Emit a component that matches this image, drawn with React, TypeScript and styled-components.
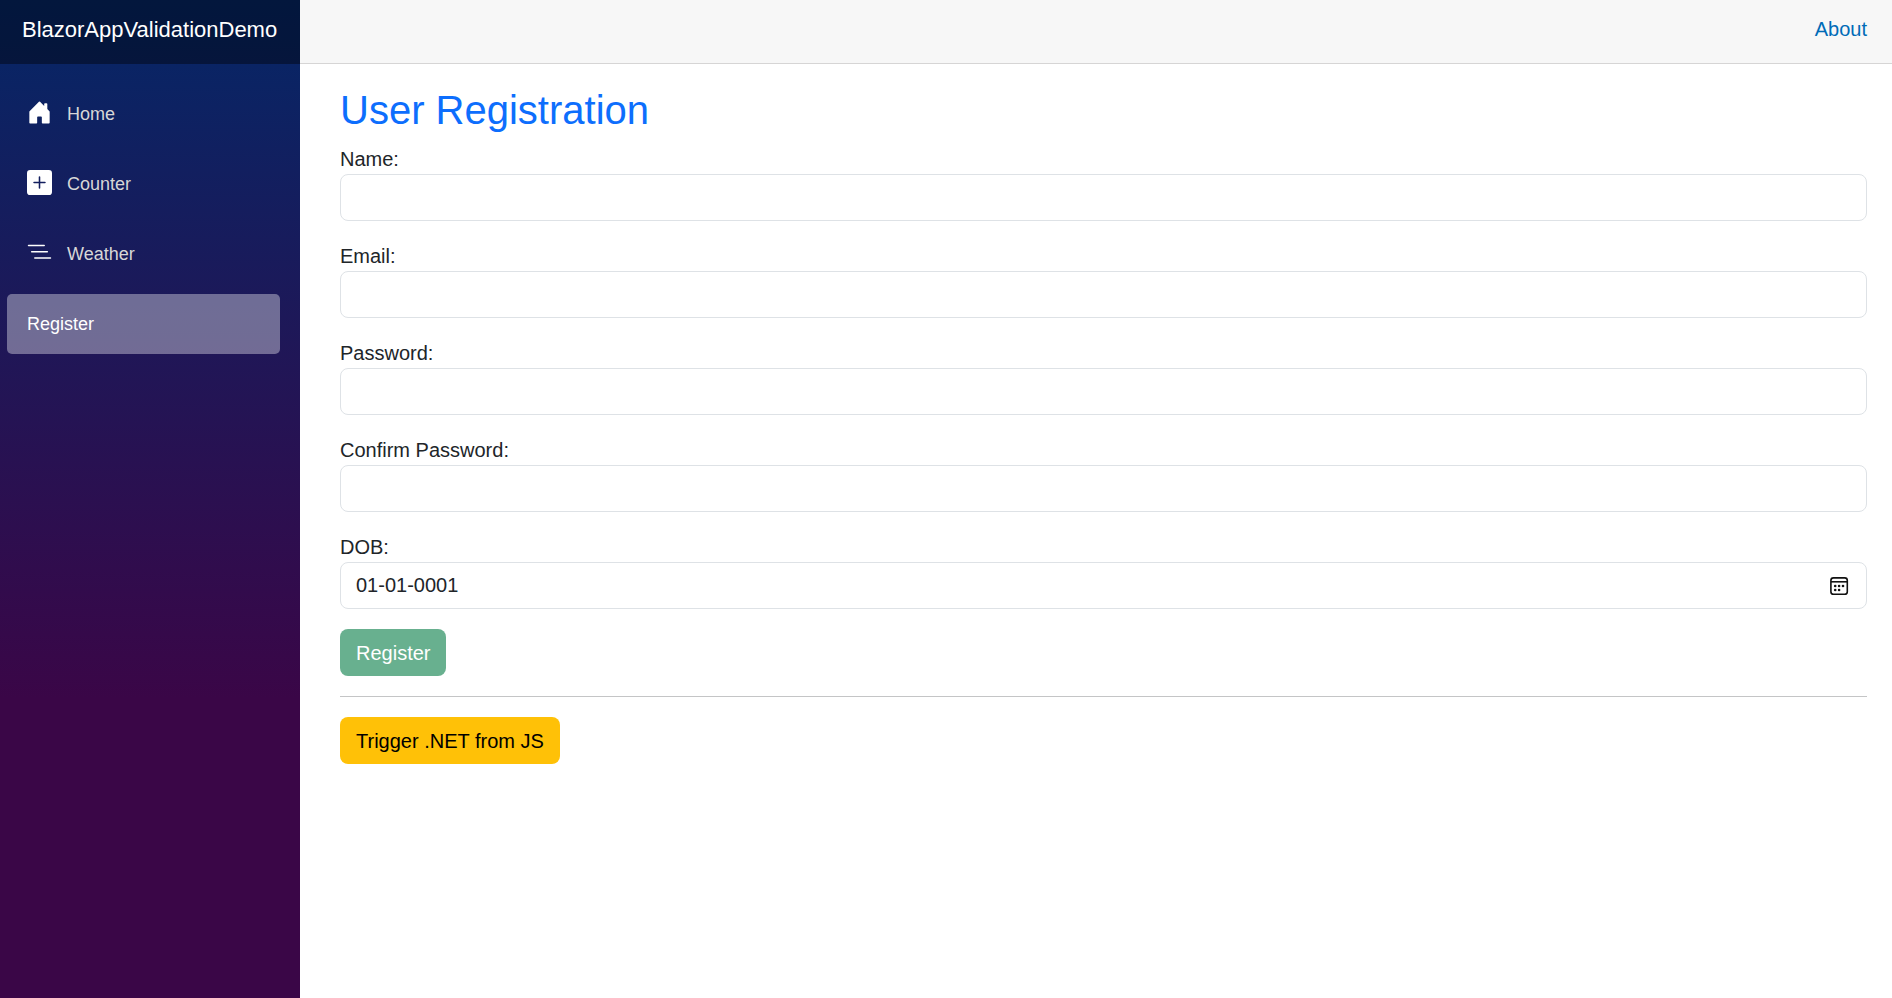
import React from "react";
import styled, { createGlobalStyle } from "styled-components";

const GlobalStyle = createGlobalStyle`
  *, *::before, *::after { box-sizing: border-box; }
  body {
    margin: 0;
    background: #fff;
    color: #212529;
    font-family: "Liberation Sans", Arial, sans-serif;
    font-size: 20px;
    line-height: 30px;
  }
`;

const Page = styled.div`
  display: flex;
  min-height: 100vh;
`;

const Sidebar = styled.aside`
  flex: 0 0 300px;
  background-image: linear-gradient(180deg, rgb(5, 39, 103) 0%, #3a0647 70%);
`;

const Brand = styled.div`
  display: flex;
  align-items: center;
  height: 64px;
  padding: 0 22px 4px;
  background: rgba(0, 0, 0, 0.4);
`;

const BrandLink = styled.a`
  color: #fff;
  font-size: 22px;
  text-decoration: none;
  white-space: nowrap;
`;

const Nav = styled.nav`
  display: flex;
  flex-direction: column;
  gap: 10px;
  padding: 20px 20px 20px 7px;
`;

const NavItem = styled.a<{ $active?: boolean }>`
  display: flex;
  align-items: center;
  height: 60px;
  padding: 0 20px;
  border-radius: 5px;
  font-size: 18px;
  text-decoration: none;
  color: ${(p) => (p.$active ? "#fff" : "#d7d7d7")};
  background: ${(p) => (p.$active ? "rgba(255, 255, 255, 0.37)" : "transparent")};
`;

const NavIcon = styled.svg`
  width: 25px;
  height: 25px;
  margin: 0 15px 3px 0;
  fill: #fff;
`;

const Main = styled.main`
  flex: 1;
  min-width: 0;
`;

const TopBar = styled.div`
  display: flex;
  align-items: center;
  justify-content: flex-end;
  height: 64px;
  padding: 0 25px 6px 40px;
  background: #f7f7f7;
  border-bottom: 1px solid #d6d5d5;
`;

const TopLink = styled.a`
  color: #006bb7;
  text-decoration: none;
`;

const Content = styled.article`
  padding: 22px 25px 22px 40px;
`;

const Title = styled.h1`
  margin: 0 0 10px;
  color: #0d6efd;
  font-size: 40px;
  font-weight: 400;
  line-height: 48px;
`;

const Field = styled.div`
  margin-bottom: 20px;
`;

const Label = styled.label`
  display: block;
  width: fit-content;
`;

const InputWrap = styled.div`
  position: relative;
`;

const Input = styled.input`
  display: block;
  width: 100%;
  height: 47px;
  padding: 0 15px;
  border: 1px solid #dee2e6;
  border-radius: 8px;
  background: #fff;
  color: #212529;
  font: inherit;
`;

const PickerButton = styled.button`
  position: absolute;
  top: 0;
  right: 16px;
  display: flex;
  align-items: center;
  height: 100%;
  padding: 0;
  border: 0;
  background: none;
`;

const Button = styled.button<{ $tone: "success" | "warning" }>`
  display: block;
  height: 47px;
  padding: 0 16px;
  border: 0;
  border-radius: 8px;
  font: inherit;
  color: ${(p) => (p.$tone === "success" ? "#fff" : "#000")};
  background: ${(p) => (p.$tone === "success" ? "#198754" : "#ffc107")};
  &:disabled { opacity: 0.65; }
`;

const Divider = styled.hr`
  margin: 20px 0;
  border: 0;
  border-top: 1px solid #c4c5c6;
`;

const icons = {
  home: "M6.5 14.5v-3.505c0-.245.25-.495.5-.495h2c.25 0 .5.25.5.5v3.5a.5.5 0 0 0 .5.5h4a.5.5 0 0 0 .5-.5v-7a.5.5 0 0 0-.146-.354L13 5.793V2.5a.5.5 0 0 0-.5-.5h-1a.5.5 0 0 0-.5.5v1.293L8.354 1.146a.5.5 0 0 0-.708 0l-6 6A.5.5 0 0 0 1.5 7.5v7a.5.5 0 0 0 .5.5h4a.5.5 0 0 0 .5-.5Z",
  plus: "M2 0a2 2 0 0 0-2 2v12a2 2 0 0 0 2 2h12a2 2 0 0 0 2-2V2a2 2 0 0 0-2-2H2zm6.5 4.5v3h3a.5.5 0 0 1 0 1h-3v3a.5.5 0 0 1-1 0v-3h-3a.5.5 0 0 1 0-1h3v-3a.5.5 0 0 1 1 0z",
  list: "M4.5 11.5A.5.5 0 0 1 5 11h10a.5.5 0 0 1 0 1H5a.5.5 0 0 1-.5-.5zm-2-4A.5.5 0 0 1 3 7h10a.5.5 0 0 1 0 1H3a.5.5 0 0 1-.5-.5zm-2-4A.5.5 0 0 1 1 3h10a.5.5 0 0 1 0 1H1a.5.5 0 0 1-.5-.5z",
};

const navItems: { label: string; icon?: keyof typeof icons }[] = [
  { label: "Home", icon: "home" },
  { label: "Counter", icon: "plus" },
  { label: "Weather", icon: "list" },
  { label: "Register" },
];

const fields = [
  { id: "name", label: "Name:", type: "text" },
  { id: "email", label: "Email:", type: "email" },
  { id: "password", label: "Password:", type: "password" },
  { id: "confirm", label: "Confirm Password:", type: "password" },
];

function CalendarIcon() {
  return (
    <svg width="24" height="24" viewBox="0 0 24 24" aria-hidden="true">
      <rect x="3.9" y="3.9" width="16.4" height="16.4" rx="2.6" fill="none" stroke="#111" strokeWidth="1.6" />
      <path d="M4 7.8h16.4" stroke="#111" strokeWidth="1.6" />
      <g fill="#111">
        <circle cx="8.2" cy="12" r="1.3" />
        <circle cx="12.1" cy="12" r="1.3" />
        <circle cx="16" cy="12" r="1.3" />
        <circle cx="8.2" cy="16" r="1.3" />
        <circle cx="12.1" cy="16" r="1.3" />
      </g>
    </svg>
  );
}

export default function App() {
  return (
    <>
      <GlobalStyle />
      <Page>
        <Sidebar>
          <Brand>
            <BrandLink href="#">BlazorAppValidationDemo</BrandLink>
          </Brand>
          <Nav>
            {navItems.map(({ label, icon }) => (
              <NavItem key={label} href={`#${label.toLowerCase()}`} $active={!icon}>
                {icon && (
                  <NavIcon viewBox="0 0 16 16" aria-hidden="true">
                    <path d={icons[icon]} />
                  </NavIcon>
                )}
                {label}
              </NavItem>
            ))}
          </Nav>
        </Sidebar>
        <Main>
          <TopBar>
            <TopLink href="#about">About</TopLink>
          </TopBar>
          <Content>
            <Title>User Registration</Title>
            <form onSubmit={(e) => e.preventDefault()}>
              {fields.map((f) => (
                <Field key={f.id}>
                  <Label htmlFor={f.id}>{f.label}</Label>
                  <Input id={f.id} type={f.type} />
                </Field>
              ))}
              <Field>
                <Label htmlFor="dob">DOB:</Label>
                <InputWrap>
                  <Input id="dob" type="text" defaultValue="01-01-0001" />
                  <PickerButton type="button" aria-label="Show date picker">
                    <CalendarIcon />
                  </PickerButton>
                </InputWrap>
              </Field>
              <Button type="submit" $tone="success" disabled>
                Register
              </Button>
            </form>
            <Divider />
            <Button type="button" $tone="warning">
              Trigger .NET from JS
            </Button>
          </Content>
        </Main>
      </Page>
    </>
  );
}
